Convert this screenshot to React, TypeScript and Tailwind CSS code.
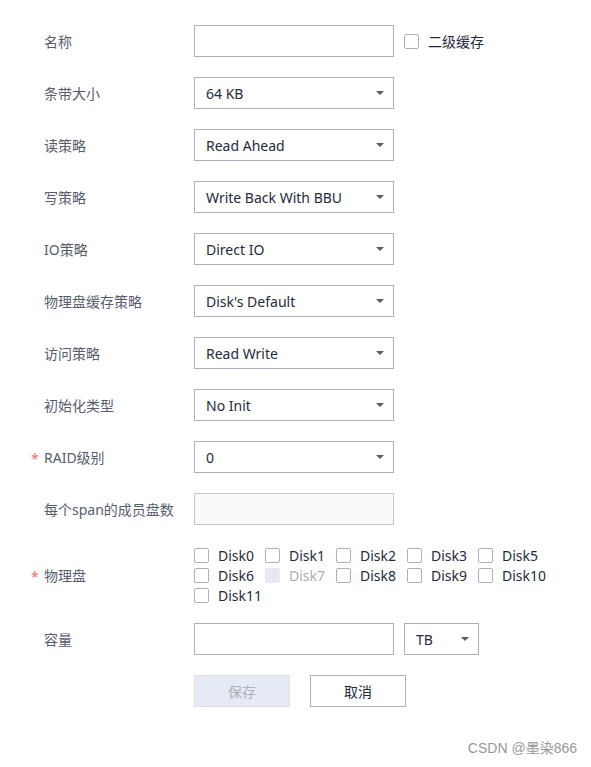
import React from 'react';

const font = { fontFamily: '"Noto Sans", "Noto Sans CJK SC", sans-serif' };

const Caret = () => (
  <svg className="w-2 h-1" viewBox="0 0 8 4">
    <path d="M0 0h8L4 4z" fill="#575d6c" />
  </svg>
);

const Row = ({ label, required, children }: { label: string; required?: boolean; children: React.ReactNode }) => (
  <div className="flex items-center">
    <div className="relative w-[194px] pl-[44px] text-[14px] leading-[19px] text-[#575d6c] shrink-0">
      {required && <span className="absolute left-[31px] top-[1px] text-[#f66f6a] text-[14px]">*</span>}
      {label}
    </div>
    {children}
  </div>
);

const Select = ({ value, w = 'w-[200px]' }: { value: string; w?: string }) => (
  <div className={`${w} h-[32px] border border-[#adb0b8] flex items-center justify-between pl-[11px] pr-[9px] text-[14px] leading-[19px] text-[#252b3a] bg-white`}>
    <span>{value}</span>
    <Caret />
  </div>
);

const Box = ({ disabled }: { disabled?: boolean }) => (
  <span
    className={`w-[15px] h-[15px] rounded-[2px] shrink-0 ${disabled ? 'bg-[#e6e9f3] border border-[#e6e9f3]' : 'border border-[#adb0b8] bg-white'}`}
  />
);

const disks = ['Disk0', 'Disk1', 'Disk2', 'Disk3', 'Disk5', 'Disk6', 'Disk7', 'Disk8', 'Disk9', 'Disk10', 'Disk11'];

export default function App() {
  return (
    <div className="relative w-[591px] h-[767px] bg-white" style={font}>
      <div className="flex flex-col pt-[25px]">
        <Row label="名称">
          <div className="w-[200px] h-[32px] border border-[#adb0b8] bg-white" />
          <div className="flex items-center ml-[10px] gap-[9px] text-[14px] text-[#252b3a]">
            <Box />
            <span>二级缓存</span>
          </div>
        </Row>
        <div className="h-[20px]" />
        <Row label="条带大小"><Select value="64 KB" /></Row>
        <div className="h-[20px]" />
        <Row label="读策略"><Select value="Read Ahead" /></Row>
        <div className="h-[20px]" />
        <Row label="写策略"><Select value="Write Back With BBU" /></Row>
        <div className="h-[20px]" />
        <Row label="IO策略"><Select value="Direct IO" /></Row>
        <div className="h-[20px]" />
        <Row label="物理盘缓存策略"><Select value="Disk's Default" /></Row>
        <div className="h-[20px]" />
        <Row label="访问策略"><Select value="Read Write" /></Row>
        <div className="h-[20px]" />
        <Row label="初始化类型"><Select value="No Init" /></Row>
        <div className="h-[20px]" />
        <Row label="RAID级别" required><Select value="0" /></Row>
        <div className="h-[20px]" />
        <Row label="每个span的成员盘数">
          <div className="w-[200px] h-[32px] border border-[#c2c6d0] bg-[#fafafa]" />
        </Row>
        <div className="h-[20px]" />
        <Row label="物理盘" required>
          <div className="flex flex-wrap w-[360px]">
            {disks.map((d) => (
              <label key={d} className="w-[71px] h-[20px] flex items-center gap-[9px] text-[14px] leading-[19px]">
                <Box disabled={d === 'Disk7'} />
                <span className={d === 'Disk7' ? 'text-[#adb0b8]' : 'text-[#252b3a]'}>{d}</span>
              </label>
            ))}
          </div>
        </Row>
        <div className="h-[18px]" />
        <Row label="容量">
          <div className="w-[200px] h-[32px] border border-[#adb0b8] bg-white" />
          <div className="ml-[10px]">
            <Select value="TB" w="w-[75px]" />
          </div>
        </Row>
        <div className="h-[20px]" />
        <div className="flex pl-[194px] gap-[20px]">
          <button className="w-[96px] h-[32px] border border-[#dfe1e6] bg-[#e6eaf5] text-[#adb0b8] text-[14px]">保存</button>
          <button className="w-[96px] h-[32px] border border-[#adb0b8] bg-white text-[#252b3a] text-[14px]">取消</button>
        </div>
      </div>
      <div className="absolute right-[14px] bottom-[8px] text-[14px] text-[#999999]" style={{ fontFamily: '"Liberation Sans", "Noto Sans CJK SC", sans-serif' }}>
        CSDN @墨染866
      </div>
    </div>
  );
}
